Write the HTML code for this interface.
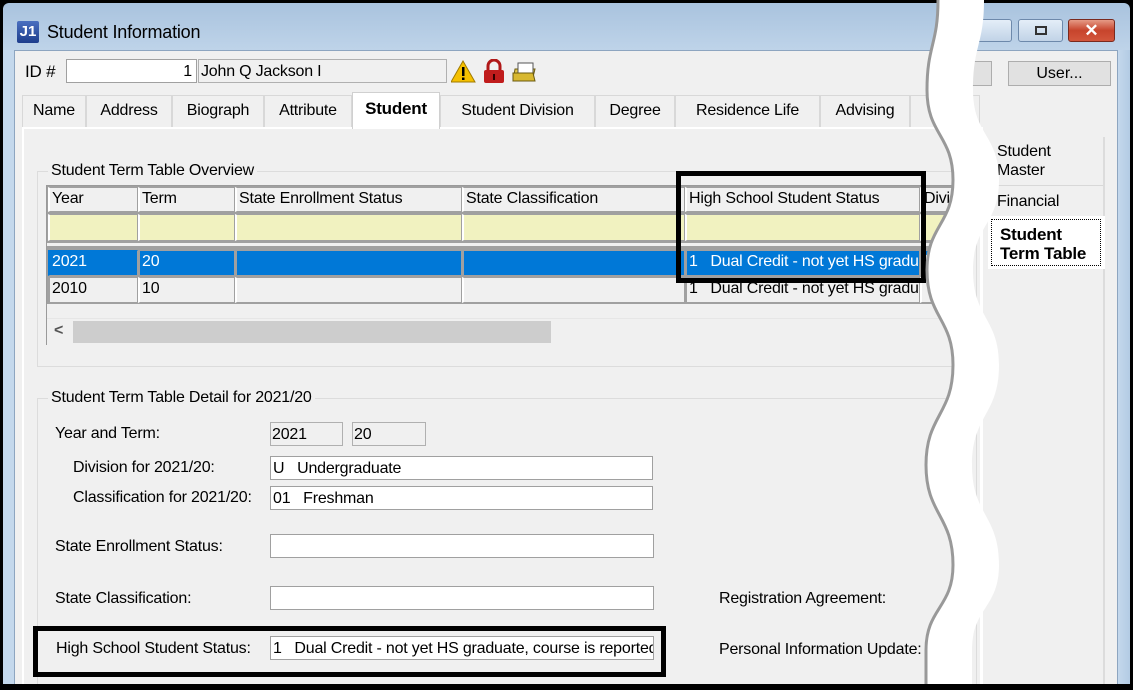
<!DOCTYPE html>
<html><head><meta charset="utf-8"><style>
*{box-sizing:border-box;margin:0;padding:0}
html,body{width:1133px;height:690px;overflow:hidden}
body{background:#000;font-family:"Liberation Sans",sans-serif;font-size:16px;color:#000;position:relative}
.a{position:absolute}
.t{position:absolute;white-space:nowrap;letter-spacing:-0.2px}
.win{left:3px;top:3px;width:1127px;height:684px;background:linear-gradient(#a9c3de,#c4d8ec 60px,#c4d8ec);border-radius:6px 6px 0 0}
.client{left:14px;top:50px;width:1104px;height:640px;background:#f0f0f0;border:1px solid #8da5c0}
.inp{position:absolute;background:#fff;border:1px solid #a0a0a0;height:24px;padding:2px 4px;white-space:nowrap;overflow:hidden;letter-spacing:-0.2px;line-height:19px}
.ro{background:#f0f0f0;border:1px solid #b0b0b0}
.tab{position:absolute;top:95px;height:32px;border:1px solid #d8d8d8;border-bottom:none;background:#f0f0f0;text-align:center;line-height:30px;letter-spacing:-0.2px;white-space:nowrap}
.cell{position:absolute;border:1px solid #a0a0a0;border-left:2px solid #fff;padding-left:2px;line-height:22px;white-space:nowrap;overflow:hidden;letter-spacing:-0.2px}
.box{position:absolute;border:5px solid #000}
.grp{position:absolute;border:1px solid #dcdcdc}
</style></head><body>
<div class="a win"></div>
<div class="a" style="left:17px;top:21px;width:22px;height:22px;background:linear-gradient(#4a6fc0,#1d3d8c);border-radius:2px;color:#fff;font-weight:bold;font-size:15px;line-height:22px;text-align:center">J1</div>
<div class="t" style="left:47px;top:22px;font-size:18px">Student Information</div>
<div class="a" style="left:972px;top:19px;width:40px;height:23px;border:1px solid #6d89ab;border-radius:3px;background:linear-gradient(#e4eef8,#c1d3e7)"></div>
<div class="a" style="left:1018px;top:19px;width:45px;height:23px;border:1px solid #6d89ab;border-radius:3px;background:linear-gradient(#e4eef8,#c1d3e7)"><div class="a" style="left:16px;top:6px;width:12px;height:9px;border:2px solid #333"></div></div>
<div class="a" style="left:1068px;top:19px;width:47px;height:23px;border:1px solid #7a2a1e;border-radius:3px;background:linear-gradient(#e59a86,#c7442c 50%,#d3563c);color:#fff;font-weight:bold;text-align:center;line-height:21px;font-size:17px">✕</div>
<div class="a client"></div>
<div class="t" style="left:25px;top:62px;font-size:17px">ID #</div>
<div class="inp" style="left:66px;top:59px;width:131px;text-align:right">1</div>
<div class="inp ro" style="left:198px;top:59px;width:249px;padding-left:2px">John Q Jackson I</div>
<svg class="a" style="left:451px;top:59px" width="90" height="26" viewBox="0 0 90 26">
<path d="M12 2 L24 23 L0 23 Z" fill="#f5c000" stroke="#a07a00"/><rect x="11" y="8" width="2.5" height="9" fill="#000"/><rect x="11" y="18.5" width="2.5" height="2.5" fill="#000"/>
<path d="M37 11 V7 a6 6 0 0 1 12 0 V11" fill="none" stroke="#b01818" stroke-width="3"/><rect x="33" y="11" width="20" height="13" rx="2" fill="#c01c1c"/><rect x="42" y="15" width="2" height="6" fill="#300"/>
<path d="M64 10 h20 l-3 12 h-19 z" fill="#e4c84a" stroke="#6a5a10"/><rect x="67" y="4" width="15" height="10" fill="#fff" stroke="#555"/><path d="M62 14 h20 l2 8 h-22z" fill="#d8b830" stroke="#6a5a10"/>
</svg>
<div class="a" style="left:1008px;top:61px;width:103px;height:25px;border:1px solid #adadad;background:#e1e1e1;text-align:center;line-height:23px">User...</div>
<div class="a" style="left:940px;top:61px;width:52px;height:25px;border:1px solid #adadad;background:#e1e1e1"></div>
<div class="tab" style="left:22px;width:64px">Name</div>
<div class="tab" style="left:86px;width:86px">Address</div>
<div class="tab" style="left:172px;width:92px">Biograph</div>
<div class="tab" style="left:264px;width:88px">Attribute</div>
<div class="tab" style="left:440px;width:155px">Student Division</div>
<div class="tab" style="left:595px;width:80px">Degree</div>
<div class="tab" style="left:675px;width:145px">Residence Life</div>
<div class="tab" style="left:820px;width:90px">Advising</div>
<div class="tab" style="left:910px;width:70px"></div>
<div class="a" style="left:22px;top:127px;width:960px;height:563px;background:#fff"></div>
<div class="a" style="left:24px;top:129px;width:956px;height:561px;background:#f0f0f0"></div>
<div class="tab" style="left:352px;top:92px;width:88px;height:37px;background:#fff;font-weight:bold;font-size:17px;line-height:32px;border-color:#d0d0d0">Student</div>
<div class="a" style="left:982px;top:127px;width:130px;height:563px;background:#f0f0f0;border-left:1px solid #fff"></div>
<div class="a" style="left:1103px;top:137px;width:2px;height:553px;background:#dcdcdc"></div>
<div class="t" style="left:997px;top:142px;line-height:19px">Student<br>Master</div>
<div class="a" style="left:988px;top:185px;width:115px;height:1px;background:#d8d8d8"></div>
<div class="t" style="left:997px;top:193px">Financial</div>
<div class="a" style="left:988px;top:216px;width:117px;height:53px;background:#fff"></div>
<div class="a" style="left:991px;top:219px;width:110px;height:47px;border:1px dotted #000"></div>
<div class="t" style="left:1000px;top:225px;font-weight:bold;line-height:19px;font-size:17px">Student<br>Term Table</div>
<!-- group 1 -->
<div class="grp" style="left:37px;top:171px;width:940px;height:196px"></div>
<div class="t" style="left:48px;top:162px;background:#f0f0f0;padding:0 3px">Student Term Table Overview</div>
<div class="a" style="left:46px;top:185px;width:920px;height:160px;border:1px solid #9a9a9a;border-right:none;background:#f0f0f0"></div>
<div class="a" style="left:47px;top:186px;width:915px;height:57px;background:#a0a0a0"></div>
<div class="a" style="left:47px;top:243px;width:915px;height:3px;background:#f0f0f0"></div>
<div class="a" style="left:47px;top:246px;width:915px;height:58px;background:#a0a0a0"></div>
<div class="cell" style="left:48px;top:187px;width:90px;height:25px;background:#f0f0f0">Year</div>
<div class="cell" style="left:138px;top:187px;width:97px;height:25px;background:#f0f0f0">Term</div>
<div class="cell" style="left:235px;top:187px;width:227px;height:25px;background:#f0f0f0">State Enrollment Status</div>
<div class="cell" style="left:462px;top:187px;width:223px;height:25px;background:#f0f0f0">State Classification</div>
<div class="cell" style="left:685px;top:187px;width:235px;height:25px;background:#f0f0f0">High School Student Status</div>
<div class="cell" style="left:920px;top:187px;width:45px;height:25px;background:#f0f0f0">Divi</div>
<div class="cell" style="left:48px;top:214px;width:90px;height:27px;background:#f1f2c0"></div>
<div class="cell" style="left:138px;top:214px;width:97px;height:27px;background:#f1f2c0"></div>
<div class="cell" style="left:235px;top:214px;width:227px;height:27px;background:#f1f2c0"></div>
<div class="cell" style="left:462px;top:214px;width:223px;height:27px;background:#f1f2c0"></div>
<div class="cell" style="left:685px;top:214px;width:235px;height:27px;background:#f1f2c0"></div>
<div class="cell" style="left:920px;top:214px;width:45px;height:27px;background:#f1f2c0"></div>
<div class="a" style="left:48px;top:250px;width:914px;height:26px;background:#0078d7"></div>
<div class="cell" style="left:48px;top:250px;width:90px;height:26px;background:#0078d7;color:#fff;border-color:#0078d7 #a0a0a0 #a0a0a0 #0078d7">2021</div>
<div class="cell" style="left:138px;top:250px;width:97px;height:26px;background:#0078d7;color:#fff;border-left-color:#a0a0a0">20</div>
<div class="cell" style="left:235px;top:250px;width:227px;height:26px;background:#0078d7;border-left-color:#a0a0a0"></div>
<div class="cell" style="left:462px;top:250px;width:223px;height:26px;background:#0078d7;border-left-color:#a0a0a0"></div>
<div class="cell" style="left:685px;top:250px;width:235px;height:26px;background:#0078d7;color:#fff;border-left-color:#a0a0a0">1&nbsp;&nbsp;&nbsp;Dual Credit - not yet HS graduate</div>
<div class="cell" style="left:920px;top:250px;width:45px;height:26px;background:#0078d7;color:#fff;border-left-color:#a0a0a0">U</div>
<div class="cell" style="left:48px;top:277px;width:90px;height:26px;background:#f0f0f0;border-left-color:#a0a0a0">2010</div>
<div class="cell" style="left:138px;top:277px;width:97px;height:26px;background:#f0f0f0">10</div>
<div class="cell" style="left:235px;top:277px;width:227px;height:26px;background:#f0f0f0"></div>
<div class="cell" style="left:462px;top:277px;width:223px;height:26px;background:#f0f0f0"></div>
<div class="cell" style="left:685px;top:277px;width:235px;height:26px;background:#f0f0f0;border-left-color:#a0a0a0">1&nbsp;&nbsp;&nbsp;Dual Credit - not yet HS graduate</div>
<div class="cell" style="left:920px;top:277px;width:45px;height:26px;background:#f0f0f0"></div>
<div class="a" style="left:47px;top:318px;width:915px;height:27px;background:#f0f0f0;border-top:1px solid #e6e6e6"></div>
<div class="t" style="left:54px;top:322px;font-weight:bold;color:#555">&lt;</div>
<div class="a" style="left:73px;top:321px;width:478px;height:22px;background:#cdcdcd"></div>
<div class="box" style="left:676px;top:171px;width:250px;height:112px"></div>
<!-- group 2 -->
<div class="grp" style="left:37px;top:398px;width:940px;height:286px;border-bottom:none"></div>
<div class="t" style="left:48px;top:389px;background:#f0f0f0;padding:0 3px">Student Term Table Detail for 2021/20</div>
<div class="t" style="left:55px;top:425px">Year and Term:</div>
<div class="inp ro" style="left:270px;top:422px;width:73px;padding-left:1px">2021</div>
<div class="inp ro" style="left:352px;top:422px;width:74px;padding-left:1px">20</div>
<div class="t" style="left:73px;top:459px">Division for 2021/20:</div>
<div class="inp" style="left:270px;top:456px;width:383px;padding-left:2px">U&nbsp;&nbsp;&nbsp;Undergraduate</div>
<div class="t" style="left:73px;top:489px">Classification for 2021/20:</div>
<div class="inp" style="left:270px;top:486px;width:383px;padding-left:2px">01&nbsp;&nbsp;&nbsp;Freshman</div>
<div class="t" style="left:55px;top:538px">State Enrollment Status:</div>
<div class="inp" style="left:270px;top:534px;width:384px"></div>
<div class="t" style="left:55px;top:590px">State Classification:</div>
<div class="inp" style="left:270px;top:586px;width:384px"></div>
<div class="t" style="left:56px;top:640px">High School Student Status:</div>
<div class="inp" style="left:270px;top:636px;width:384px;padding-left:2px">1&nbsp;&nbsp;&nbsp;Dual Credit - not yet HS graduate, course is reported</div>
<div class="box" style="left:33px;top:626px;width:633px;height:51px"></div>
<div class="t" style="left:719px;top:590px">Registration Agreement:</div>
<div class="t" style="left:719px;top:641px">Personal Information Update:</div>
<div class="a" style="left:1118px;top:50px;width:12px;height:640px;background:linear-gradient(90deg,#c4d8ec,#b3cbe4)"></div>
<div class="a" style="left:3px;top:50px;width:11px;height:640px;background:#c4d8ec"></div>
<svg class="a" style="left:0;top:0" width="1133" height="690" viewBox="0 0 1133 690">
<path d="M938 0 C938 45 927 45 927 90 C927 135 953 135 953 180 C953 225 927 225 927 270 C927 318 953 318 953 365 C953 415 926 415 926 465 C926 515 953 515 953 565 C953 608 926 608 926 650 L926 690 L972 690 L972 650 C972 608 999 608 999 565 C999 515 972 515 972 465 C972 415 999 415 999 365 C999 318 973 318 973 270 C973 225 999 225 999 180 C999 135 973 135 973 90 C973 45 984 45 984 0 Z" fill="#fff"/>
<path d="M938 0 C938 45 927 45 927 90 C927 135 953 135 953 180 C953 225 927 225 927 270 C927 318 953 318 953 365 C953 415 926 415 926 465 C926 515 953 515 953 565 C953 608 926 608 926 650 L926 690" fill="none" stroke="#999" stroke-width="3"/>
</svg>
<div class="a" style="left:0;top:684px;width:1133px;height:6px;background:#000"></div>
</body></html>
